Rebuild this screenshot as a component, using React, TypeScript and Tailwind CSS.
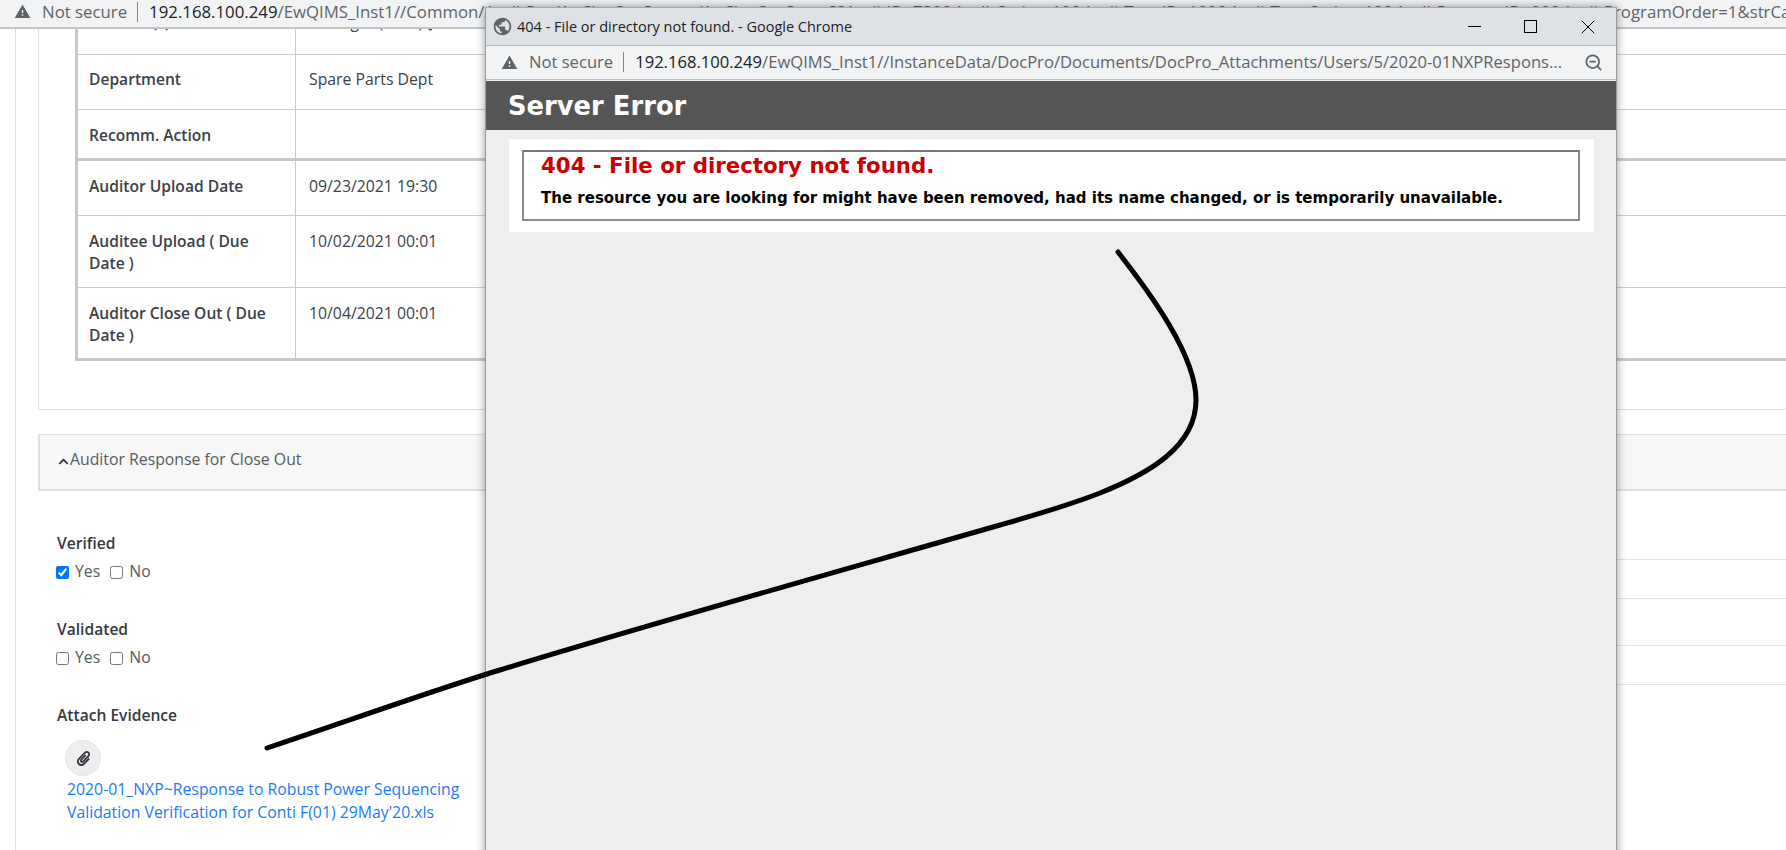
import { ZoomOut, X } from "lucide-react";
import { FaChevronUp, FaPaperclip } from "react-icons/fa";
import { MdPublic, MdWarning } from "react-icons/md";

const rows = [
    { label: "Department", value: "Spare Parts Dept", row: "h-[55px] border-b border-[#cccccc]", cell: "items-center pb-[7px]" },
    { label: "Recomm. Action", value: "", row: "h-[51px] border-b-[3px] border-[#c8c8c8]", cell: "items-center pt-[1px]" },
    { label: "Auditor Upload Date", value: "09/23/2021 19:30", row: "h-[55px] border-b border-[#cccccc]", cell: "items-center pb-[5px]" },
    { label: "Auditee Upload ( Due Date )", value: "10/02/2021 00:01", row: "h-[72px] border-b border-[#cccccc]", cell: "pt-[14px]" },
    { label: "Auditor Close Out ( Due Date )", value: "10/04/2021 00:01", row: "h-[70px]", cell: "pt-[14px]" },
];

function AddressBar({ url, rest }: { url: string; rest: string }) {
    return (
        <div className="flex min-w-0 flex-1 items-center overflow-hidden whitespace-nowrap">
            <MdWarning className="h-[17px] w-[17px] shrink-0 text-[#5f6368]" />
            <span className="ml-[11px] text-[#5f6368]">Not secure</span>
            <span className="ml-[10px] h-[20px] w-px shrink-0 bg-[#80868b]" />
            <span className="ml-[11px] text-[#202124]">{url}</span>
            <span className="text-[#5f6368]">{rest}</span>
        </div>
    );
}

function CheckOption({ label, checked }: { label: string; checked?: boolean }) {
    return (
        <label className="flex items-center gap-[6px]">
            <input type="checkbox" checked={!!checked} readOnly className="m-0 h-[13px] w-[13px]" />
            <span>{label}</span>
        </label>
    );
}

function CheckField({ label, yes, height }: { label: string; yes?: boolean; height: string }) {
    return (
        <div className={height}>
            <div className="h-[28px] text-[15.6px] font-semibold leading-[26px] text-[#343a40]">{label}</div>
            <div className="-ml-px flex h-[28px] items-center gap-[10px] text-[15.8px] text-[#555b61]">
                <CheckOption label="Yes" checked={yes} />
                <CheckOption label="No" />
            </div>
        </div>
    );
}

function PopupWindow() {
    return (
        <div className="absolute left-[485px] top-[7px] flex h-[860px] w-[1132px] flex-col border-x border-t border-x-[#9a9a9a] border-t-[#a8a8a8] bg-[#eeeeee] shadow-[0_0_9px_rgba(0,0,0,0.4)]">
            {/* Title bar */}
            <div className="flex h-[38px] shrink-0 items-center border-b border-[#b4b7bb] bg-[#dee1e6] pl-[6px]">
                <MdPublic className="h-[21px] w-[21px] text-[#5f6368]" />
                <span className="ml-[4px] flex-1 text-[14.5px] text-[#202124]">404 - File or directory not found. - Google Chrome</span>
                <div className="flex items-center text-black">
                    <div className="h-px w-[13px] bg-black" />
                    <div className="ml-[43px] h-[13px] w-[13px] border border-black" />
                    <X className="ml-[39px] mr-[16px] h-[24px] w-[24px]" strokeWidth={1} />
                </div>
            </div>
            {/* Address bar */}
            <div className="flex h-[34px] shrink-0 items-center border-b border-[#b9bcc0] bg-[#f1f3f4] pl-[15px] pr-[13px] text-[16.6px]">
                <AddressBar url="192.168.100.249" rest="/EwQIMS_Inst1//InstanceData/DocPro/Documents/DocPro_Attachments/Users/5/2020-01NXPRespons..." />
                <ZoomOut className="ml-[20px] h-[19px] w-[19px] text-[#5f6368]" strokeWidth={2.2} />
            </div>
            {/* Page */}
            <div className="mt-[1px] flex h-[49px] shrink-0 items-center bg-[#555555] pl-[22px] pt-[2px] font-['DejaVu_Sans',sans-serif] text-[25.8px] font-bold text-white">
                Server Error
            </div>
            <div className="ml-[23px] mr-[22px] mt-[9px] h-[93px] bg-white pl-[13px] pr-[14px] pt-[11px] font-['DejaVu_Sans',sans-serif] font-bold">
                <div className="h-[71px] border-2 border-[#8a8a8a] border-t-[#777777] pl-[17px]">
                    <div className="h-[30px] text-[21.3px] leading-[28px] text-[#cc0000]">404 - File or directory not found.</div>
                    <div className="mt-[4px] text-[15px] leading-[24px] text-black">
                        The resource you are looking for might have been removed, had its name changed, or is temporarily unavailable.
                    </div>
                </div>
            </div>
        </div>
    );
}

export default function App() {
    return (
        <div className="relative h-[850px] w-[1786px] overflow-hidden bg-white font-['Open_Sans',sans-serif]">
            {/* Browser address bar */}
            <div className="flex h-[29px] items-center border-b-2 border-[#c4c4c4] bg-[#f1f3f4] pb-[4px] pl-[14px] text-[16.8px]">
                <AddressBar
                    url="192.168.100.249"
                    rest="/EwQIMS_Inst1//Common/AuditRes/AuClosOutScreen/AuClosOutScree3?AuditID=730&AuditOrder=10&AuditTypeID=100&AuditTypeOrder=10&AuditProgramID=90&AuditProgramOrder=1&strCat=1"
                />
            </div>

            {/* Underlying page */}
            <div className="ml-[15px] h-[821px] border-l border-[#dddddd] pl-[22px]">
                <div className="h-[381px] rounded-b-[2px] border-b border-l border-[#dddddd] pl-[36px]">
                    <div className="border-b-[3px] border-l-[3px] border-[#c8c8c8] text-[15.8px] text-[#3b4147]">
                        <div className="flex h-[26px] border-b border-[#cccccc]">
                            <div className="w-[218px] shrink-0 overflow-hidden border-r border-[#cccccc] pl-[11px] font-semibold">
                                <div className="mt-[-18px]">Auditee (s)</div>
                            </div>
                            <div className="overflow-hidden pl-[13px]">
                                <div className="mt-[-18px]">Manager (HOD) [</div>
                            </div>
                        </div>
                        {rows.map((row) => (
                            <div key={row.label} className={`flex ${row.row}`}>
                                <div className={`flex w-[218px] shrink-0 border-r border-[#cccccc] pl-[11px] pr-[20px] text-[15.6px] font-semibold leading-[22px] ${row.cell}`}>
                                    {row.label}
                                </div>
                                <div className={`flex pl-[13px] leading-[22px] ${row.cell}`}>{row.value}</div>
                            </div>
                        ))}
                    </div>
                </div>

                {/* Accordion header */}
                <div className="mt-[24px] flex h-[57px] items-start border-b-2 border-l-2 border-t border-[#dfdfdf] bg-[#f7f7f7] pl-[18px] pt-[13px] text-[15.8px] leading-[22px] text-[#555b61]">
                    <FaChevronUp className="mr-[1px] mt-[8px] h-[11px] w-[11px] text-[#343a40]" />
                    Auditor Response for Close Out
                </div>

                <div className="flex">
                    {/* Form */}
                    <div className="w-[447px] shrink-0 pl-[19px] pt-[39px]">
                        <CheckField label="Verified" yes height="h-[86px]" />
                        <CheckField label="Validated" height="h-[85px]" />
                        <div className="h-[28px] text-[15.6px] font-semibold leading-[28px] text-[#343a40]">Attach Evidence</div>
                        <div className="ml-[8px] mt-[11px] flex h-[36px] w-[36px] items-center justify-center rounded-full border border-[#e6e6e6] bg-[#eeeeee]">
                            <FaPaperclip className="h-[15px] w-[15px] text-[#343a40]" />
                        </div>
                        <a href="#" className="ml-[10px] mt-[2px] block w-[410px] text-[15.8px] leading-[23px] text-[#1a7cf5]">
                            2020-01_NXP~Response to Robust Power Sequencing Validation Verification for Conti F(01) 29May'20.xls
                        </a>
                    </div>
                    {/* Right column rows */}
                    <div className="flex-1">
                        <div className="h-[69px] border-b border-[#e4e4e4]" />
                        <div className="h-[39px] border-b border-[#e4e4e4]" />
                        <div className="h-[47px] border-b border-[#e4e4e4]" />
                        <div className="h-[39px] border-b border-[#e4e4e4]" />
                    </div>
                </div>
            </div>

            <PopupWindow />

            {/* Hand-drawn annotation */}
            <svg className="pointer-events-none absolute inset-0" width="1786" height="850" fill="none">
                <path
                    d="M1118 252 C1150 293 1196 355 1196 400 C1196 446 1150 473 1100 493 C1067 506 1035 515 1000 525 C833 573 667 619 500 670 C440 688 345 722 267 748"
                    stroke="#000000"
                    strokeWidth="5"
                    strokeLinecap="round"
                    strokeLinejoin="round"
                />
            </svg>
        </div>
    );
}
